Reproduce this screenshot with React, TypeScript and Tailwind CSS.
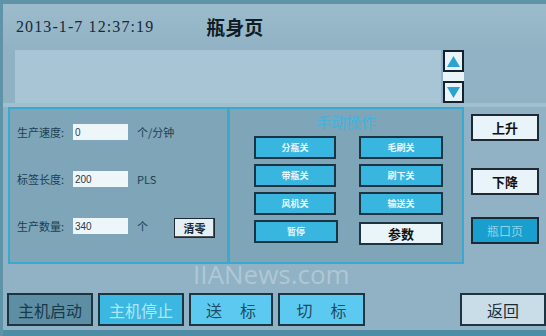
import React from "react";

const cjk = { fontFamily: '"Noto Sans CJK SC", "Noto Sans", sans-serif' };

const manual = [
  ["分瓶关", "毛刷关"],
  ["带瓶关", "刷下关"],
  ["风机关", "输送关"],
];

function FieldRow({ label, value, unit, extra }: { label: string; value: string; unit: string; extra?: React.ReactNode }) {
  return (
    <div className="flex h-[16px] items-center">
      <span className="w-[56px] text-[11px] text-[#1d3e52]">{label}</span>
      <div className="flex h-[16px] w-[55px] items-center bg-[#eef6fa] pl-[2px] text-[10px] text-[#1d3e52]" style={{ fontFamily: '"Liberation Sans", sans-serif' }}>
        {value}
      </div>
      <span className="ml-[9px] text-[11px] text-[#1d3e52]">{unit}</span>
      {extra}
    </div>
  );
}

function ManualBtn({ label, wide }: { label: string; wide?: boolean }) {
  return (
    <div className={`flex h-[23px] ${wide ? "w-[84px]" : "w-[82px]"} items-center justify-center border-2 border-[#1b3443] bg-[#38b6e0] text-[9px] font-bold text-[#eaf8fd]`}>
      {label}
    </div>
  );
}

export default function App() {
  return (
    <div className="relative h-[336px] w-[546px] overflow-hidden border-l-[3px] border-t-[4px] border-[#5f93a7] bg-[#90b2c4]" style={cjk}>
      {/* header */}
      <div className="flex h-[46px] items-center bg-gradient-to-b from-[#9cbccc] to-[#90b2c4] pl-[13px]">
        <span className="text-[16px] tracking-[1.1px] text-[#17293a]" style={{ fontFamily: '"Liberation Serif", serif' }}>
          2013-1-7 12:37:19
        </span>
        <span className="ml-[52px] text-[19px] font-bold text-[#111c24]">瓶身页</span>
      </div>

      {/* message bar */}
      <div className="flex h-[53px] pl-[12px]">
        <div className="h-full w-[426px] bg-[#a8c5d5]" />
        <div className="ml-[2px] flex w-[21px] flex-col">
          <div className="flex h-[22px] items-center justify-center border-2 border-[#13222c] bg-[#e9f4f8]">
            <svg width="13" height="11" viewBox="0 0 13 11"><polygon points="6.5,0 13,11 0,11" fill="#2aa3d0" /></svg>
          </div>
          <div className="h-[9px] bg-[#e9f4f8]" />
          <div className="flex h-[22px] items-center justify-center border-2 border-[#13222c] bg-[#e9f4f8]">
            <svg width="13" height="11" viewBox="0 0 13 11"><polygon points="0,0 13,0 6.5,11" fill="#2aa3d0" /></svg>
          </div>
        </div>
      </div>

      <div className="h-[4px] bg-[#a0bfcf]" />

      {/* panels */}
      <div className="flex h-[157px] pl-[5px]">
        <div className="flex w-[221px] flex-col gap-[31px] border-2 border-[#39a9cf] bg-[#7ea5b8] pl-[7px] pt-[15px]">
          <FieldRow label="生产速度:" value="0" unit="个/分钟" />
          <FieldRow label="标签长度:" value="200" unit="PLS" />
          <FieldRow
            label="生产数量:"
            value="340"
            unit="个"
            extra={
              <div className="ml-[26px] mt-[4px] flex h-[20px] w-[41px] items-center justify-center border border-[#1b2a33] bg-[#e4f0f6] text-[11px] font-bold text-[#1a2a35] shadow-[inset_-1px_-1px_0_#555]">
                清零
              </div>
            }
          />
        </div>
        <div className="-ml-[1px] flex w-[236px] flex-col items-center border-2 border-[#39a9cf] bg-[#7ea5b8]">
          <div className="mt-[3px] h-[20px] text-[15px] leading-[20px] text-[#42b3dc]">手动操作</div>
          <div className="mt-[4px] flex w-full flex-col gap-[5px] pl-[24px]">
            {manual.map(([a, b]) => (
              <div key={a} className="flex gap-[23px]">
                <ManualBtn label={a} />
                <ManualBtn label={b} wide />
              </div>
            ))}
            <div className="flex gap-[21px]">
              <ManualBtn label="暂停" wide />
              <div className="mt-[2px] flex h-[23px] w-[84px] items-center justify-center border-2 border-[#1b3443] bg-[#eaf5fa] text-[13px] font-bold text-[#111]">
                参数
              </div>
            </div>
          </div>
        </div>
        <div className="ml-[7px] flex w-[68px] flex-col pt-[7px]">
          <div className="flex h-[27px] items-center justify-center border-2 border-[#1b2a33] bg-[#e8f4f9] text-[13px] font-bold text-[#111]">上升</div>
          <div className="mt-[27px] flex h-[27px] items-center justify-center border-2 border-[#1b2a33] bg-[#e8f4f9] text-[13px] font-bold text-[#111]">下降</div>
          <div className="mt-[22px] flex h-[27px] items-center justify-center border-2 border-[#1b2a33] bg-[#189fcd] text-[12px] text-[#8fd3ea]">瓶口页</div>
        </div>
      </div>

      {/* bottom buttons */}
      <div className="mt-[29px] flex h-[33px] pl-[4px]">
        <div className="flex w-[86px] items-center justify-center border-2 border-[#1d3442] bg-[#5e8ea3] text-[16px] text-[#18394a]">主机启动</div>
        <div className="ml-[5px] flex w-[86px] items-center justify-center border-2 border-[#1d3442] bg-[#3bb8e2] text-[16px] text-[#aee6f7]">主机停止</div>
        <div className="ml-[5px] flex w-[84px] items-center justify-center gap-[18px] border-2 border-[#1d3442] bg-[#5ccaf0] text-[16px] text-[#1d4a64]">
          <span>送</span><span>标</span>
        </div>
        <div className="ml-[5px] flex w-[87px] items-center justify-center gap-[18px] border-2 border-[#1d3442] bg-[#5ccaf0] text-[16px] text-[#1d4a64]">
          <span>切</span><span>标</span>
        </div>
        <div className="ml-[95px] flex w-[86px] items-center justify-center border-2 border-[#1d3442] bg-[#c9dde8] text-[16px] text-[#1a2e3a]">返回</div>
      </div>

      <div className="mt-[4px] h-[10px] bg-[#4d8ea6]" />

      {/* watermark */}
      <div className="pointer-events-none absolute left-[190px] top-[251px] text-[26px] text-white/30" style={{ fontFamily: '"Open Sans", sans-serif' }}>
        IIANews.com
      </div>
    </div>
  );
}
